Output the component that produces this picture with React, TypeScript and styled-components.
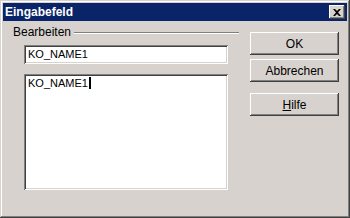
import { FC } from 'react';
import styled, { createGlobalStyle } from 'styled-components';

const GlobalStyle = createGlobalStyle`
  html, body {
    margin: 0;
    padding: 0;
    background: #d8d2ce;
  }
  * {
    box-sizing: border-box;
  }
`;

const Window = styled.div`
  width: 350px;
  height: 218px;
  background: #d8d2ce;
  font-family: "Liberation Sans", Arial, sans-serif;
  font-size: 12px;
  color: #000;
  box-shadow:
    inset -1px -1px 0 #404040,
    inset 1px 1px 0 #d8d2ce,
    inset -2px -2px 0 #808080,
    inset 2px 2px 0 #ffffff;
  padding: 3px 3px 0;
  display: flex;
  flex-direction: column;
`;

const TitleBar = styled.div`
  height: 18px;
  background: #0a246a;
  display: flex;
  align-items: center;
  justify-content: space-between;
  padding: 0 2px 0 2px;
`;

const Title = styled.span`
  color: #fff;
  font-weight: bold;
  font-size: 12px;
`;

const CloseButton = styled.div`
  width: 16px;
  height: 14px;
  background: #d8d2ce;
  display: flex;
  align-items: center;
  justify-content: center;
  box-shadow:
    inset -1px -1px 0 #404040,
    inset 1px 1px 0 #ffffff,
    inset -2px -2px 0 #808080;
`;

const Body = styled.div`
  display: flex;
  padding: 5px 0 0 9px;
`;

const Group = styled.div`
  width: 227px;
  display: flex;
  flex-direction: column;
`;

const Legend = styled.div`
  display: flex;
  align-items: center;
  gap: 3px;
  height: 12px;
  padding-left: 1px;
`;

const Rule = styled.div`
  flex: 1;
  height: 2px;
  border-top: 1px solid #808080;
  border-bottom: 1px solid #ffffff;
  margin-top: 2px;
`;

const Fields = styled.div`
  display: flex;
  flex-direction: column;
  gap: 10px;
  padding-left: 12px;
  margin-top: 7px;
`;

const Field = styled.div<{ $height: number }>`
  width: 204px;
  height: ${({ $height }) => $height}px;
  background: #fff;
  padding: 3px 4px;
  font-size: 11px;
  white-space: pre;
  line-height: 13px;
  box-shadow:
    inset 1px 1px 0 #808080,
    inset -1px -1px 0 #ffffff,
    inset 2px 2px 0 #404040,
    inset -2px -2px 0 #d8d2ce;
`;

const Caret = styled.span`
  display: inline-block;
  width: 2px;
  height: 12px;
  background: #000;
  vertical-align: -2px;
  margin-left: 1px;
`;

const Buttons = styled.div`
  display: flex;
  flex-direction: column;
  margin-left: 11px;
  padding-top: 6px;
`;

const Button = styled.div<{ $gap?: number }>`
  width: 89px;
  height: 23px;
  margin-top: ${({ $gap }) => $gap ?? 0}px;
  display: flex;
  align-items: center;
  justify-content: center;
  box-shadow:
    inset -1px -1px 0 #404040,
    inset 1px 1px 0 #ffffff,
    inset -2px -2px 0 #808080;
`;

const Mnemonic = styled.span`
  text-decoration: underline;
`;

const App: FC = () => {
  return (
    <>
      <GlobalStyle />
      <Window>
        <TitleBar>
          <Title>Eingabefeld</Title>
          <CloseButton>
            <svg width="8" height="7" viewBox="0 0 8 7">
              <path d="M0 0h2l2 2 2-2h2L5 3.5 8 7H6L4 5 2 7H0l3-3.5z" fill="#000" />
            </svg>
          </CloseButton>
        </TitleBar>
        <Body>
          <Group>
            <Legend>
              <span>Bearbeiten</span>
              <Rule />
            </Legend>
            <Fields>
              <Field $height={19}>KO_NAME1</Field>
              <Field $height={116}>
                KO_NAME1<Caret />
              </Field>
            </Fields>
          </Group>
          <Buttons>
            <Button>OK</Button>
            <Button $gap={4}>Abbrechen</Button>
            <Button $gap={11}>
              <span>
                <Mnemonic>H</Mnemonic>ilfe
              </span>
            </Button>
          </Buttons>
        </Body>
      </Window>
    </>
  );
};

export default App;
